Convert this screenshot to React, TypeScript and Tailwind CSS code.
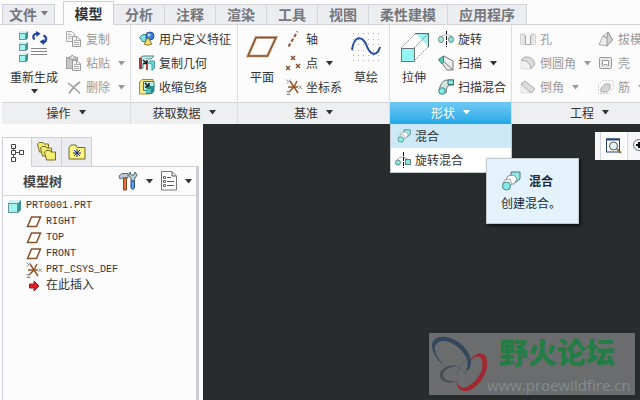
import React from "react";

type Kids = { children?: React.ReactNode };

function Caret({ className = "text-[#333]" }: { className?: string }) {
  return (
    <svg width="7" height="5" viewBox="0 0 7 5" className={`shrink-0 ${className}`} aria-hidden="true">
      <path d="M0 0H7L3.500 4.500Z" fill="currentColor" />
    </svg>
  );
}

function Svg({ w = 16, h = 16, vb, children }: Kids & { w?: number; h?: number; vb?: string }) {
  return (
    <svg width={w} height={h} viewBox={vb ?? `0 0 ${w} ${h}`} fill="none" className="shrink-0" aria-hidden="true">
      {children}
    </svg>
  );
}

function Cube({ x = 0, y = 0, s = 7, d = 2 }: { x?: number; y?: number; s?: number; d?: number }) {
  return (
    <g transform={`translate(${x} ${y})`}>
      <path d={`M0 ${d}L${d} 0H${s + d}V${s}L${s} ${s + d}V${d}Z`} fill="#3f9492" />
      <path d={`M0 ${d}L${d} 0H${s + d}L${s} ${d}Z`} fill="#d5f5f4" />
      <rect x="0.5" y={d + 0.5} width={s - 1} height={s - 1} fill="#a0f3ef" stroke="#6d9696" />
    </g>
  );
}

const RegenIcon = () => (
  <Svg w={32} h={32}>
    <Cube x={1} y={0} /><Cube x={1} y={11} /><Cube x={1} y={22} />
    <path d="M16.500 8.500C13.500 5 16.500 2 20 2.500" stroke="#1c3fa8" strokeWidth="2" />
    <path d="M18 0L22.500 2.500L18.500 6Z" fill="#1c3fa8" />
    <path d="M25.500 4.500C29.500 6 29 11 25 11.500" stroke="#1c3fa8" strokeWidth="2" />
    <path d="M21.500 10.500L26.500 8L26 14Z" fill="#1c3fa8" />
    <path d="M13 17.500H29M13 20.500H29M13 23.500H29" stroke="#858585" />
  </Svg>
);
const CopyIcon = () => (
  <Svg>
    <path d="M.5 .500H6L8.500 3V10.500H.5Z" fill="#f2f2f2" stroke="#a9a9a9" />
    <path d="M2 3.500H5M2 5.500H6M2 7.500H5" stroke="#b7b7b7" />
    <path d="M6.500 5.500H11L14.500 9V15.500H6.500Z" fill="#f4f4f4" stroke="#999" />
    <path d="M10.500 6V9.500H14M8 9.500H10M8 11.500H13M8 13.500H13" stroke="#aaa" />
  </Svg>
);
const PasteIcon = () => (
  <Svg>
    <rect x=".5" y="2.500" width="11" height="11" fill="#c6c6c6" stroke="#a0a0a0" />
    <path d="M3 4V2H5L5.500 .500H7L8 2H10V4Z" fill="#eee" stroke="#999" />
    <path d="M6.500 5.500H11L14.500 9V15.500H6.500Z" fill="#f5f5f5" stroke="#999" />
    <path d="M10.500 6V9.500H14M8 9.500H10M8 11.500H13M8 13.500H13" stroke="#aaa" />
  </Svg>
);
const DeleteIcon = () => (
  <Svg><path d="M2 4C6 7 10 10 14 14.500M14 3C9 6 6 10 3 14.500" stroke="#9a9a9a" strokeWidth="1.500" /></Svg>
);
const UdfIcon = () => (
  <Svg>
    <path d="M.5 6.500L4 3.500H10L7 6.500V10.500H3.500Z" fill="#82e4df" stroke="#397f84" />
    <circle cx="11" cy="5" r="4" fill="#3a80db" stroke="#2250a0" />
    <circle cx="10" cy="4" r="1.500" fill="#c1e2ff" />
    <path d="M9 6.500L13 13Q9 15.500 5 13Z" fill="#f0dc6b" stroke="#8f7a31" />
  </Svg>
);
const CopyGeomIcon = () => (
  <Svg>
    <path d="M1 3L4 1H15L12 4H6V8H4V13L1 14Z" fill="#b7f2f0" stroke="#547c7d" />
    <path d="M0 3H3V14H0Z" fill="#a53e39" />
    <path d="M3 4H9V9H3Z" fill="#d9efee" />
    <path d="M4 5L8 8.500M8 5V8.500H4" stroke="#151515" strokeWidth="1.500" />
    <path d="M8 9L11 6H15.500V13L13 15.500V9Z" fill="#63ddd8" stroke="#4b9b9b" />
    <path d="M9 9H12V15H9Z" fill="#d5ffff" />
    <path d="M8 9V15" stroke="#b43d3e" strokeWidth="2" />
  </Svg>
);
const ShrinkIcon = () => (
  <Svg>
    <path d="M.5 3L3 .500H14V4L11 15H.500Z" fill="#f7e884" stroke="#a28a2d" />
    <path d="M4.500 2.500H15V8H11V11.500H4.500Z" fill="#c2eeeb" stroke="#397c7b" />
    <path d="M6 4L10 8M10 4V8H6" stroke="#101010" strokeWidth="1.500" />
    <path d="M7 10L10 7H15.500V12L13 15H7Z" fill="#288a88" />
    <path d="M7 10H12V14H7Z" fill="#53bdb8" />
  </Svg>
);
const PlaneIcon = ({ small = false }: { small?: boolean }) => small ? (
  <Svg w={16} h={12}><path d="M5.500 1H14.500L10.500 10.500H1.500Z" fill="#fffdf9" stroke="#86502d" strokeWidth="1.500" /></Svg>
) : (
  <Svg w={32} h={32}><path d="M10 6.500H30L21.500 25H2Z" fill="#fffdfb" stroke="#d5bca9" strokeWidth="3" /><path d="M10 6.500H30L21.500 25H2Z" stroke="#865024" strokeWidth="1.500" /></Svg>
);
const AxisIcon = () => <Svg><path d="M2.500 15.500L11.500 .500" stroke="#8c522f" strokeWidth="2" strokeDasharray="3.500 2" /></Svg>;
const PointIcon = () => <Svg><path d="M5 1L9 5M9 1L5 5M0 11L4 15M4 11L0 15M10 9L14 13M14 9L10 13" stroke="#8c522f" strokeWidth="1.500" /></Svg>;
const CsysIcon = () => (
  <Svg>
    <path d="M8 8L4 2M8 8L3 13M2 8H12M8 8L11 2M8 8L12 14" stroke="#965529" strokeWidth="1.500" />
    <path d="M.5 .500L2.500 2.500M4.500 .500L1 4.500M.5 12.500H4L1 15.500H4.500M12.500 6.500L16 10M16 6.500L12.500 10" stroke="#8c8c8c" />
  </Svg>
);
const SketchIcon = () => (
  <Svg w={32} h={32}>
    <path d="M3 2.500H31M3 8.500H31M3 13.500H31M3 19.500H31M3 24.500H31M3 29.500H31" stroke="#a9a9a9" strokeDasharray="1 4" />
    <path d="M2 19C4 5 11 4 16 13C20 25 27 26 30 16" stroke="#244c9d" strokeWidth="2" />
  </Svg>
);
const ExtrudeIcon = () => (
  <Svg w={32} h={32}>
    <path d="M3 17L17 3H30V16L16 30" fill="#fff" stroke="#929292" strokeDasharray="2 1" />
    <path d="M18 3H30V15Z" fill="#a2efef" /><path d="M17 2.500H30.500V16" stroke="#476d70" />
    <path d="M16 17L30 3" stroke="#777" strokeDasharray="2 1" />
    <rect x="3.500" y="17.500" width="13" height="13" fill="#94f5f1" stroke="#6b7879" />
  </Svg>
);
const RevolveIcon = () => (
  <Svg>
    <path d="M8.500 0V16" stroke="#111" strokeDasharray="4 1" />
    <path d="M3 5Q8 2 14 5" stroke="#bbb" />
    <ellipse cx="3" cy="8.500" rx="2.500" ry="3" fill="#b2e5e1" stroke="#668585" />
    <ellipse cx="13" cy="8.500" rx="2.500" ry="3" fill="#8ee3dd" stroke="#668585" />
  </Svg>
);
const SweepIcon = () => (
  <Svg>
    <path d="M1 5L6 1L15 6V15L9 15L4 8Z" fill="#ececec" stroke="#777" />
    <path d="M.5 4.500L5.500 1V7.500L4 9Z" fill="#56cdb8" stroke="#3c8179" />
    <path d="M6 7L15 15" stroke="#777" />
  </Svg>
);
const SweepBlendIcon = () => (
  <Svg>
    <path d="M1 11C3 3 6 1 10 1H16V6H12Q8 7 8 14Z" fill="#d4e4e2" stroke="#657575" />
    <path d="M10 1H15.500V5.500H10Z" fill="#85e9e3" stroke="#3f706f" />
    <circle cx="4" cy="12" r="3.300" fill="#7cece4" stroke="#498380" />
  </Svg>
);
const BlendIcon = ({ large = false }: { large?: boolean }) => (
  <Svg w={large ? 20 : 14} h={large ? 20 : 14} vb="0 0 20 20">
    <path d="M10 1H19V8L15 11H10Z" fill="#8eeee8" stroke="#537575" />
    <path d="M7 5L13 4L16 8L13 13L7 13L5 9Z" fill="#fff" stroke="#8d9292" />
    <path d="M4 9L9 8L11 13L8 16H3L2 12Z" fill="#fff" stroke="#a0a0a0" />
    <circle cx="5.500" cy="15" r="4" fill="#86eae5" stroke="#508180" />
  </Svg>
);
const RotBlendIcon = () => (
  <Svg>
    <path d="M2 8Q4 4 8 5L13 7" stroke="#aaa" /><path d="M8.500 0V16" stroke="#111" strokeDasharray="4 1" />
    <circle cx="3" cy="10.500" r="2.500" fill="#83e8e2" stroke="#668585" />
    <rect x="10.500" y="7.500" width="5" height="5" fill="#83e8e2" stroke="#668585" />
  </Svg>
);
const HoleIcon = () => (
  <Svg><path d="M.5 3.500H5V13.500H.500ZM11 3.500H15.500V13.500H11Z" fill="#e6e6e6" stroke="#bbb" strokeDasharray="1 1" /><path d="M3 2.500L5.500 5V13.500H10.500V5L13 2.500" fill="#f6f6f6" stroke="#a8a8a8" /></Svg>
);
const RoundIcon = () => (
  <Svg><path d="M1 5L5 2Q13 1 15 9L11 14Q11 6 1 5Z" fill="#dcdcdc" stroke="#aaa" /><path d="M1 6Q10 6 10 14H1Z" fill="#f1f1f1" stroke="#ccc" strokeDasharray="1 1" /></Svg>
);
const ChamferIcon = () => (
  <Svg><path d="M1 5L5 2L15 10L11 14Z" fill="#dcdcdc" stroke="#aaa" /><path d="M1 6L10 14H1Z" fill="#f1f1f1" stroke="#ccc" strokeDasharray="1 1" /></Svg>
);
const DraftIcon = () => (
  <Svg><path d="M1 13.500L5 5L10 1L14.500 9L9 15Z" fill="#eee" stroke="#aaa" /><path d="M5 5L9 7V15L14.500 9L10 1L9 7Z" fill="#d3d3d3" stroke="#999" /></Svg>
);
const ShellIcon = () => (
  <Svg><rect x="1.500" y="2.500" width="12" height="11" rx="1" fill="#e8e8e8" stroke="#999" /><path d="M4.500 11V5.500H10.500V11L9 9.500H6Z" fill="#fff" stroke="#999" /></Svg>
);
const RibIcon = () => (
  <Svg><path d="M.5 14.500V5L5 1.500H15.500V9L11 14.500Z" stroke="#aaa" strokeDasharray="1 2" /><path d="M3 13V9L7 5H12V10L9 13Z" fill="#d5d5d5" stroke="#aaa" /></Svg>
);

function BigButton({ icon, label, caret }: { icon: React.ReactNode; label: string; caret?: boolean }) {
  return (
    <button type="button" className="flex w-12 shrink-0 flex-col items-center whitespace-nowrap text-[#333]">
      {icon}
      <span className="mt-[6px] leading-4">{label}</span>
      {caret && <span className="flex pt-1"><Caret /></span>}
    </button>
  );
}

function Cmd({ icon, label, caret, disabled }: { icon: React.ReactNode; label: string; caret?: boolean; disabled?: boolean }) {
  return (
    <button type="button" disabled={disabled} className={`flex h-6 items-center gap-1 whitespace-nowrap ${disabled ? "text-[#9a9a9a]" : "text-[#333]"}`}>
      {icon}
      <span>{label}</span>
      {caret && <Caret className={disabled ? "ml-1 text-[#999]" : "ml-1 text-[#333]"} />}
    </button>
  );
}

const Stack = ({ children }: Kids) => <div className="flex shrink-0 flex-col items-start">{children}</div>;

function Group({ title, width, active, children }: Kids & { title: string; width: string; active?: boolean }) {
  return (
    <section className={`flex shrink-0 flex-col border-r border-[#dcdde1] ${width}`}>
      <div className="flex h-[77px] items-start pt-[2px]">{children}</div>
      <button
        type="button"
        className={`flex h-[22px] items-center justify-center gap-2 border-t pb-[2px] ${active ? "border-[#6cc5f1] bg-linear-to-b from-[#6cc8f3] to-[#1da9e9] text-white" : "border-[#d3d5d9] bg-[#eeeff1] text-[#333]"}`}
      >
        {title}
        <Caret className={active ? "text-white" : "text-[#333]"} />
      </button>
    </section>
  );
}

const tabs = ["分析", "注释", "渲染", "工具", "视图", "柔性建模", "应用程序"];

function Tabs() {
  return (
    <nav className="flex h-6 items-end pl-[2px] text-[14px] leading-[18px] font-bold text-[#74767c]">
      <button type="button" className="mr-2 flex h-5 w-[53px] items-center justify-center gap-1 border border-b-0 border-[#ced0d5] bg-[#ecedf0] pb-[2px]">
        文件<Caret className="text-[#777]" />
      </button>
      <button type="button" className="-mb-px h-[24px] w-[51px] border border-b-0 border-[#ced0d5] bg-[#fcfcfd] pb-[2px] text-[#333]">模型</button>
      {tabs.map((t) => (
        <button key={t} type="button" className={`h-5 border-t border-r border-[#d3d5d9] bg-[#ecedf0] pb-[2px] ${t.length > 2 ? "w-[79px]" : "w-[51px]"}`}>{t}</button>
      ))}
    </nav>
  );
}

function ShapeMenu() {
  return (
    <div className="absolute top-[124px] left-[390px] w-[122px] border border-t-0 border-[#c4cace] bg-white text-[#333]">
      <button type="button" className="flex h-6 w-full items-center gap-1 bg-[#cde8f6] pl-[6px]"><BlendIcon /><span>混合</span></button>
      <button type="button" className="flex h-6 w-full items-center gap-1 pl-1"><RotBlendIcon /><span>旋转混合</span></button>
    </div>
  );
}

function Tip() {
  return (
    <div role="tooltip" className="absolute top-[158px] left-[486px] flex h-[66px] w-[93px] flex-col border border-[#c2cbd0] bg-[#e3f2fb] pt-3 pl-[14px] text-[#202a35] shadow-[2px_2px_3px_#101314]">
      <div className="flex items-center gap-2"><BlendIcon large /><strong>混合</strong></div>
      <p className="mt-1">创建混合。</p>
    </div>
  );
}

const TreeTabIcon = () => (
  <Svg w={14} h={20}><path d="M3.500 5V14M5 9.500H10" stroke="#555" /><path d="M1.500 1.500H5.500V5.500H1.500ZM1.500 7.500H5.500V11.500H1.500ZM1.500 14.500H5.500V18.500H1.500ZM9.500 7.500H13.500V11.500H9.500Z" fill="#fff" stroke="#444" /></Svg>
);
const FoldersIcon = () => (
  <Svg w={20} h={20}>
    {["translate(0 0)", "translate(3 4)", "translate(7 8)"].map((t) => (
      <path key={t} transform={t} d="M.5 2L2 .500H6L7 2H11.500V10H2.500Z" fill="#f3ed72" stroke="#766a29" />
    ))}
  </Svg>
);
const FavIcon = () => (
  <Svg w={18} h={16}><path d="M1 3.500L3 1H8L9 3.500H17V15H1Z" fill="#fff77f" stroke="#6b652f" /><path d="M9 5V13M5 9H13M6 6L12 12M12 6L6 12" stroke="#17268b" /></Svg>
);
const ToolsIcon = () => (
  <Svg w={20} h={20}>
    <path d="M1 5L4 2.500H10V7H4L2 8Z" fill="#b9cad5" stroke="#55707f" />
    <path d="M5.500 7H8.500V19H5.500Z" fill="#e4763a" stroke="#804224" />
    <path d="M12 1L13 4H16L17 1L19 4L16.500 8V10H13V7L10.500 4Z" fill="#bdcdd5" stroke="#50666f" />
    <path d="M13 10H16.500V17Q15 20 13 17Z" fill="#5b9fe0" stroke="#285383" />
  </Svg>
);
const ListIcon = () => (
  <Svg w={16} h={20}><path d="M.5 .500H11L15.500 5V19H.500Z" fill="#fff" stroke="#777" /><path d="M11 1V5H15M6 6.500H10M6 10.500H13M6 14.500H13" stroke="#555" /><path d="M2.500 5.500H4.500V7.500H2.500ZM2.500 9.500H4.500V11.500H2.500ZM2.500 13.500H4.500V15.500H2.500Z" stroke="#666" /></Svg>
);

const tree = [
  { name: "RIGHT", icon: <PlaneIcon small /> },
  { name: "TOP", icon: <PlaneIcon small /> },
  { name: "FRONT", icon: <PlaneIcon small /> },
  { name: "PRT_CSYS_DEF", icon: <CsysIcon /> },
  { name: "在此插入", icon: <Svg w={16} h={12}><path d="M3.500 4H8V1L13 6L8 11V8H3.500Z" fill="#e51b23" stroke="#84242a" /></Svg> },
];

function TreePanel() {
  return (
    <aside className="flex w-[203px] shrink-0 flex-col bg-[#fcfcfd] pt-[13px] pr-1 pl-[2px]">
      <div className="flex h-[30px]">
        <button type="button" aria-label="模型树" className="flex w-[30px] items-center justify-center border border-b-0 border-[#ced0d5]"><TreeTabIcon /></button>
        <button type="button" aria-label="文件夹" className="flex w-[30px] items-center justify-center border border-l-0 border-[#ced0d5] bg-[#ecedf0]"><FoldersIcon /></button>
        <button type="button" aria-label="收藏夹" className="flex w-[30px] items-center justify-center border border-l-0 border-[#ced0d5] bg-[#ecedf0]"><FavIcon /></button>
        <div className="grow border-b border-[#ced0d5]" />
      </div>
      <div className="grow border-r-3 border-l border-r-[#cccdd5] border-l-[#ced0d5]">
        <div className="flex h-[29px] items-center border-b border-[#d6d7dd] pr-1 pl-5">
          <h2 className="grow text-[13px] font-bold text-[#444]">模型树</h2>
          <button type="button" aria-label="设置" className="mr-2 flex items-center gap-2"><ToolsIcon /><Caret /></button>
          <button type="button" aria-label="显示" className="flex items-center gap-2"><ListIcon /><Caret /></button>
        </div>
        <ul className="pt-[2px] font-['Liberation_Mono','Noto_Sans_CJK_SC',monospace] text-[10px] leading-4 text-[#333]">
          <li className="flex h-4 items-center gap-1 pl-[5px]"><Svg w={14} h={13}><Cube x={0} y={0} s={10} d={3} /></Svg>PRT0001.PRT</li>
          {tree.map((n) => (
            <li key={n.name} className={`flex h-4 items-center gap-1 pl-[23px] ${n.name === "在此插入" ? "text-[12px]" : ""}`}>{n.icon}{n.name}</li>
          ))}
        </ul>
      </div>
    </aside>
  );
}

function Watermark() {
  return (
    <div className="absolute right-[5px] bottom-[5px] flex h-[62px] w-[206px] bg-[#6b6c6e]">
      <Svg w={58} h={62}>
        <path d="M38 38C47 30 40 16 28 8C15 0 3 4 3 12C3 20 9 28 16 33C9 26 5 19 6 14C8 7 17 6 26 12C36 19 42 29 37 38Z" fill="#33475c" />
        <path d="M40 28C46 19 57 17 58 28C60 40 48 57 37 58C30 59 27 53 28 46C29 53 32 56 37 54C46 51 56 38 53 28C51 21 46 23 40 28Z" fill="#a02831" />
        <path d="M28 33C18 31 10 37 11 43C12 49 20 51 28 48C20 49 14 46 14 42C14 37 21 34 28 33Z" fill="#484f54" />
        <path d="M28 42C29 36 34 28 40 24M26 33C31 34 35 37 37 41" stroke="#555b60" />
      </Svg>
      <div className="flex flex-col whitespace-nowrap">
        <span className="pl-3 text-[29px] leading-9 font-black text-[#247d44]">野火论坛</span>
        <span className="mt-[6px] font-['Open_Sans',sans-serif] text-[15px] leading-5 text-[#879596] opacity-80">www.proewildfire.cn</span>
      </div>
    </div>
  );
}

export default function App() {
  return (
    <div className="relative flex h-screen flex-col overflow-hidden bg-[#fcfcfd] font-['Noto_Sans_CJK_SC',sans-serif] text-[12px] leading-4">
      <header>
        <Tabs />
        <div className="flex border-t border-[#d3d5d9] pl-[2px]">
          <Group title="操作" width="w-[129px]">
            <div className="flex gap-2 pl-2">
              <div className="pt-1"><BigButton icon={<RegenIcon />} label="重新生成" caret /></div>
              <Stack><Cmd disabled icon={<CopyIcon />} label="复制" /><Cmd disabled caret icon={<PasteIcon />} label="粘贴" /><Cmd disabled caret icon={<DeleteIcon />} label="删除" /></Stack>
            </div>
          </Group>
          <Group title="获取数据" width="w-[107px]">
            <div className="pl-2"><Stack><Cmd icon={<UdfIcon />} label="用户定义特征" /><Cmd icon={<CopyGeomIcon />} label="复制几何" /><Cmd icon={<ShrinkIcon />} label="收缩包络" /></Stack></div>
          </Group>
          <Group title="基准" width="w-[152px]">
            <div className="pt-1"><BigButton icon={<PlaneIcon />} label="平面" /></div>
            <Stack><Cmd icon={<AxisIcon />} label="轴" /><Cmd caret icon={<PointIcon />} label="点" /><Cmd icon={<CsysIcon />} label="坐标系" /></Stack>
            <div className="pt-1"><BigButton icon={<SketchIcon />} label="草绘" /></div>
          </Group>
          <Group title="形状" width="w-[122px]" active>
            <div className="pt-1"><BigButton icon={<ExtrudeIcon />} label="拉伸" /></div>
            <Stack><Cmd icon={<RevolveIcon />} label="旋转" /><Cmd caret icon={<SweepIcon />} label="扫描" /><Cmd icon={<SweepBlendIcon />} label="扫描混合" /></Stack>
          </Group>
          <Group title="工程" width="w-[156px]">
            <div className="flex gap-[7px] pl-2">
              <Stack><Cmd disabled icon={<HoleIcon />} label="孔" /><Cmd disabled caret icon={<RoundIcon />} label="倒圆角" /><Cmd disabled caret icon={<ChamferIcon />} label="倒角" /></Stack>
              <Stack><Cmd disabled icon={<DraftIcon />} label="拔模" /><Cmd disabled icon={<ShellIcon />} label="壳" /><Cmd disabled caret icon={<RibIcon />} label="筋" /></Stack>
            </div>
          </Group>
        </div>
      </header>
      <main className="flex min-h-0 grow">
        <TreePanel />
        <div className="relative grow bg-[#282c2d]">
          <div className="absolute top-2 right-0 flex h-7 w-[45px] overflow-hidden bg-[#f6f6f8] pl-[5px]">
            <button type="button" aria-label="重新调整" className="flex w-7 shrink-0 items-center justify-center border-x border-[#d6d6dc] bg-[#fcfcfd]">
              <Svg><rect x=".5" y="1" width="13" height="13" fill="#fff" stroke="#244576" /><path d="M0 1.500H14" stroke="#244576" strokeWidth="2" /><circle cx="7.500" cy="8" r="4" fill="#e6f5f6" stroke="#555" /><path d="M11 11L15 15" stroke="#8e7230" strokeWidth="2" /></Svg>
            </button>
            <button type="button" aria-label="放大" className="ml-1 shrink-0"><Svg><circle cx="7" cy="7" r="5.500" fill="#eef4f5" stroke="#777" /><path d="M4 7H10M7 4V10" stroke="#111" strokeWidth="2" /></Svg></button>
          </div>
          <Watermark />
        </div>
      </main>
      <ShapeMenu />
      <Tip />
    </div>
  );
}
